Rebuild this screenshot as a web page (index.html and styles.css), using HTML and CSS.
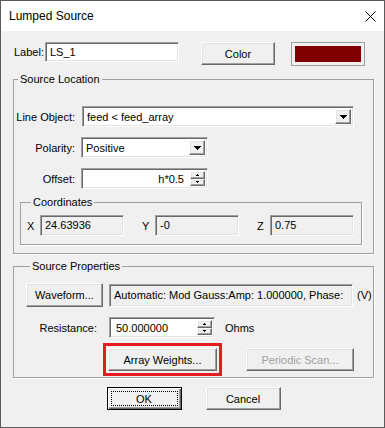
FILE: index.html
```html
<!DOCTYPE html>
<html lang="en">
<head>
    <meta charset="UTF-8">
    <title>Lumped Source</title>
    <link rel="stylesheet" href="styles.css">
</head>
<body>
    <div class="window">
        <div class="titlebar">
            <span class="title">Lumped Source</span>
            <svg class="close" width="11" height="11" viewBox="0 0 11 11">
                <path d="M0.5 0.5 L10.5 10.5 M10.5 0.5 L0.5 10.5" stroke="#000" stroke-width="1" fill="none"/>
            </svg>
        </div>
        <div class="dialog">
            <div class="label-row">
                <span class="label-text">Label:</span>
                <div class="sunken label-field">LS_1</div>
                <button class="btn color-btn">Color</button>
                <div class="swatch"><div class="swatch-fill"></div></div>
            </div>

            <fieldset class="group loc">
                <legend>Source Location</legend>
                <div class="form-grid">
                    <span class="form-label">Line Object:</span>
                    <div class="sunken combo line-combo">
                        <span class="combo-text">feed &lt; feed_array</span>
                        <span class="btn drop"><svg width="7" height="4" viewBox="0 0 7 4" shape-rendering="crispEdges"><path d="M0 0h7v1h-1v1h-1v1h-1v1h-1v-1h-1v-1h-1v-1h-1z" fill="#000"/></svg></span>
                    </div>
                    <span class="form-label">Polarity:</span>
                    <div class="sunken combo short">
                        <span class="combo-text">Positive</span>
                        <span class="btn drop"><svg width="7" height="4" viewBox="0 0 7 4" shape-rendering="crispEdges"><path d="M0 0h7v1h-1v1h-1v1h-1v1h-1v-1h-1v-1h-1v-1h-1z" fill="#000"/></svg></span>
                    </div>
                    <span class="form-label">Offset:</span>
                    <div class="sunken spin-field short">
                        <span class="spin-value right">h*0.5</span>
                        <span class="spin">
                            <span class="btn spin-btn"><i class="arrow-up"></i></span>
                            <span class="btn spin-btn"><i class="arrow-down"></i></span>
                        </span>
                    </div>
                </div>

                <fieldset class="group coords">
                    <legend>Coordinates</legend>
                    <div class="coord-row">
                        <div class="coord"><span class="axis">X</span><div class="sunken readonly coord-field">24.63936</div></div>
                        <div class="coord"><span class="axis">Y</span><div class="sunken readonly coord-field">-0</div></div>
                        <div class="coord"><span class="axis">Z</span><div class="sunken readonly coord-field">0.75</div></div>
                    </div>
                </fieldset>
            </fieldset>

            <fieldset class="group props">
                <legend>Source Properties</legend>
                <div class="wave-row">
                    <button class="btn wave-btn">Waveform...</button>
                    <div class="sunken readonly wave-field">Automatic: Mod Gauss:Amp: 1.000000, Phase:</div>
                    <span class="unit-v">(V)</span>
                </div>
                <div class="res-row">
                    <span class="res-label">Resistance:</span>
                    <div class="sunken spin-field res-field">
                        <span class="spin-value">50.000000</span>
                        <span class="spin">
                            <span class="btn spin-btn"><i class="arrow-up"></i></span>
                            <span class="btn spin-btn"><i class="arrow-down"></i></span>
                        </span>
                    </div>
                    <span class="ohms">Ohms</span>
                </div>
                <div class="btn-row">
                    <button class="btn array-btn">Array Weights...</button>
                    <button class="btn periodic-btn" disabled>Periodic Scan...</button>
                </div>
            </fieldset>

            <div class="actions">
                <button class="btn default-btn"><span class="focus">OK</span></button>
                <button class="btn cancel-btn">Cancel</button>
            </div>
        </div>
    </div>
</body>
</html>
```

FILE: styles.css
```css
body {
    margin: 0;
    padding: 0;
    font-family: "Liberation Sans", Arial, sans-serif;
    font-size: 11px;
    color: #000;
}

.window {
    width: 385px;
    height: 428px;
    box-sizing: border-box;
    border: 1px solid #5a5a5a;
    background: #f0f0f0;
}

.titlebar {
    display: flex;
    align-items: center;
    height: 30px;
    padding-left: 8px;
    background: #fff;
}

.title {
    flex: 1;
    font-size: 12px;
}

.close {
    margin-right: 8px;
}

.dialog {
    padding: 11px 10px 0 12px;
}

/* classic 3d look */
.sunken {
    box-sizing: border-box;
    border: 1px solid;
    border-color: #a0a0a0 #fff #fff #a0a0a0;
    box-shadow: inset 1px 1px #696969, inset -1px -1px #e3e3e3;
    background: #fff;
}

.sunken.readonly {
    background: #f0f0f0;
}

.btn {
    box-sizing: border-box;
    padding: 0;
    border: 1px solid;
    border-color: #fff #696969 #696969 #fff;
    box-shadow: inset -1px -1px #a0a0a0, inset 1px 1px #e3e3e3;
    background: #f0f0f0;
    font: inherit;
    color: #000;
}

.btn:disabled {
    color: #a0a0a0;
}

/* label row */
.label-row {
    display: flex;
    align-items: flex-start;
    padding-left: 1px;
}

.label-text {
    width: 31px;
    line-height: 20px;
}

.label-field {
    width: 134px;
    height: 20px;
    padding-left: 4px;
    line-height: 18px;
}

.color-btn {
    width: 74px;
    height: 23px;
    margin-left: 22px;
}

.swatch {
    box-sizing: border-box;
    width: 74px;
    height: 24px;
    margin-left: 16px;
    padding: 3px;
    border: 1px solid #a0a0a0;
}

.swatch-fill {
    height: 100%;
    background: #800000;
}

/* group boxes */
.group {
    box-sizing: border-box;
    min-width: 0;
    margin: 0;
    border: 1px solid #a0a0a0;
    box-shadow: 1px 1px #fff;
}

.group > legend {
    margin-left: 4px;
    padding: 0 2px;
    line-height: 13px;
}

.loc {
    margin-top: 7px;
    padding: 20px 0 8px 0;
}

.form-grid {
    display: grid;
    grid-template-columns: 61px auto;
    column-gap: 6px;
    row-gap: 10px;
    align-items: center;
    justify-items: start;
}

.form-label {
    justify-self: end;
}

.combo,
.spin-field {
    display: flex;
    align-items: center;
    height: 21px;
    padding: 2px;
}

.combo-text {
    flex: 1;
    padding-left: 2px;
}

.line-combo {
    width: 272px;
    margin-left: 1px;
}

.short {
    width: 127px;
}

.drop {
    display: flex;
    align-items: center;
    justify-content: center;
    width: 16px;
    align-self: stretch;
}

.spin-value {
    flex: 1;
    padding-left: 4px;
}

.spin-value.right {
    text-align: right;
    padding-right: 6px;
}

.spin {
    display: flex;
    flex-direction: column;
    width: 15px;
    align-self: stretch;
}

.spin-btn {
    flex: 1;
    display: flex;
    align-items: center;
    justify-content: center;
}

.arrow-up,
.arrow-down {
    width: 1px;
    height: 1px;
    background: #000;
}

.arrow-up {
    box-shadow: -1px 1px #000, 0 1px #000, 1px 1px #000;
    margin-top: -1px;
}

.arrow-down {
    box-shadow: -1px -1px #000, 0 -1px #000, 1px -1px #000;
    margin-top: 1px;
}

.coords {
    width: 342px;
    margin: 7px 0 0 6px;
    padding: 6px 6px 8px 6px;
}

.coord-row {
    display: flex;
    gap: 18px;
}

.coord {
    display: flex;
    align-items: center;
}

.axis {
    width: 13px;
}

.coord-field {
    width: 84px;
    height: 21px;
    padding-left: 4px;
    line-height: 19px;
}

/* source properties */
.props {
    margin-top: 6px;
    padding: 10px 0 6px 12px;
}

.wave-row,
.res-row,
.btn-row {
    display: flex;
    align-items: center;
}

.wave-btn {
    width: 77px;
    height: 24px;
}

.wave-field {
    width: 244px;
    height: 23px;
    margin-left: 6px;
    padding-left: 4px;
    line-height: 21px;
}

.unit-v {
    margin-left: 4px;
}

.res-row {
    margin-top: 10px;
}

.res-label {
    width: 71px;
    text-align: right;
}

.res-field {
    width: 106px;
    margin-left: 12px;
}

.ohms {
    margin-left: 10px;
}

.btn-row {
    margin-top: 10px;
}

.array-btn {
    width: 109px;
    height: 23px;
    margin-left: 82px;
    outline: 3px solid #e31b23;
    outline-offset: 2px;
}

.periodic-btn {
    width: 108px;
    height: 23px;
    margin-left: 29px;
}

/* bottom buttons */
.actions {
    display: flex;
    justify-content: center;
    gap: 24px;
    margin-top: 9px;
}

.default-btn,
.cancel-btn {
    width: 75px;
    height: 23px;
}

.default-btn {
    display: flex;
    padding: 3px;
    border-color: #000;
    box-shadow: inset 1px 1px #fff, inset -1px -1px #696969, inset -2px -2px #a0a0a0;
}

.focus {
    flex: 1;
    display: flex;
    align-items: center;
    justify-content: center;
    border: 1px dotted #000;
}
```
